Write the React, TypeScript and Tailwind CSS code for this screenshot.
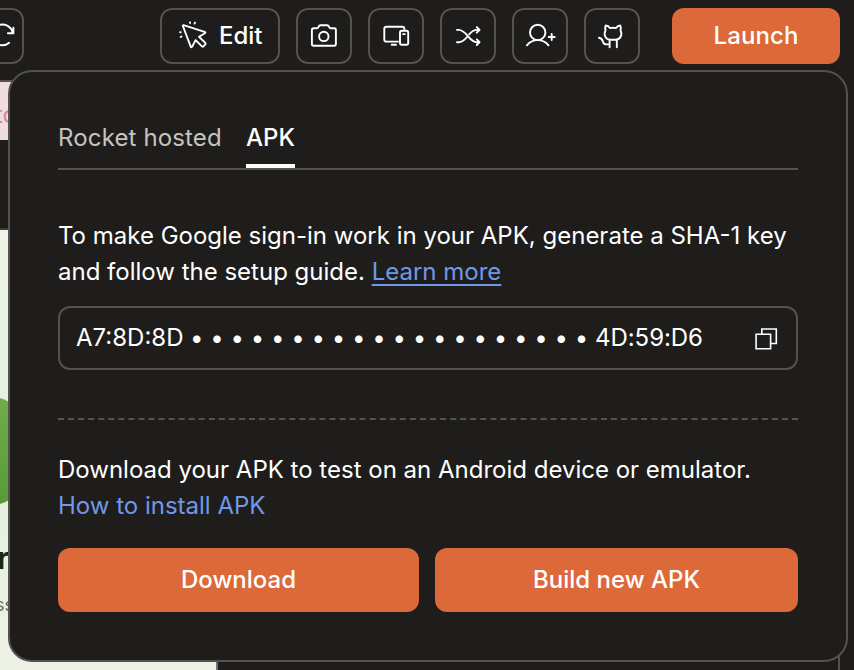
import type { ReactNode } from "react";

const BULLETS = Array.from({ length: 20 });

function ToolButton({ label, children }: { label: string; children: ReactNode }) {
    return (
        <button
            aria-label={label}
            className="flex h-14 w-14 shrink-0 items-center justify-center rounded-xl border-2 border-[#54524d] text-white"
        >
            {children}
        </button>
    );
}

function Icon({ children, className = "" }: { children: ReactNode; className?: string }) {
    return (
        <svg
            width="32"
            height="32"
            viewBox="0 0 32 32"
            fill="none"
            stroke="currentColor"
            strokeWidth="1.9"
            strokeLinecap="round"
            strokeLinejoin="round"
            className={`shrink-0 ${className}`}
        >
            {children}
        </svg>
    );
}

function Toolbar() {
    return (
        <header className="flex h-20 items-start pt-2 text-white">
            <div className="-ml-8 flex">
                <ToolButton label="Reload">
                    <Icon className="translate-x-1.5">
                        <path d="M26.6 12.6A10.4 10.4 0 1 0 23.2 22.800M27.400 7.700v5.500h-5.500" />
                    </Icon>
                </ToolButton>
            </div>

            <div className="ml-[136px] flex gap-4">
                <button className="flex h-14 w-[120px] items-center rounded-xl border-2 border-[#54524d] pl-4 text-2xl font-medium">
                    <Icon>
                        <path d="M5.600 5.200l21 6.600c.9.3 1 .9.3 1.400L21 16.700l6.300 6.200c.5.5.5 1 0 1.500l-1.800 1.900c-.5.500-1 .500-1.500 0l-6.400-6.200-3.400 6.500c-.5.900-1.200.900-1.500 0L4.900 6c-.2-.6.1-1 .7-.8Z" />
                        <path d="M11.900 2.300l.2.700M16.500 3.600l.5-1M2.100 12.200l.6.100M2.700 17l.8-.5" />
                    </Icon>
                    <span className="ml-[9px]">Edit</span>
                </button>
                <ToolButton label="Screenshot">
                    <Icon>
                        <path d="M3.900 10c0-1 .7-1.700 1.700-1.700h3.300c.8 0 1.200-.4 1.500-1.100l.4-.9c.3-.7.8-1 1.500-1h7c.7 0 1.200.3 1.500 1l.4.9c.3.7.7 1.100 1.500 1.100h3.500c1 0 1.700.7 1.700 1.700v14c0 1-.7 1.700-1.700 1.700H5.600c-1 0-1.700-.7-1.700-1.700Z" />
                        <circle cx="15.800" cy="16.400" r="4.700" />
                    </Icon>
                </ToolButton>
                <ToolButton label="Devices">
                    <Icon>
                        <path d="M18 21.600H6.500c-1.300 0-2.200-.9-2.200-2.200V8.900c0-1.300.9-2.200 2.200-2.200h15.700c1.300 0 2.200.9 2.200 2.200M11.700 24.700h4.300" />
                        <rect x="20" y="10.800" width="8.200" height="14" rx="1.800" />
                        <path d="M23 14.100h1.800" />
                    </Icon>
                </ToolButton>
                <ToolButton label="Shuffle">
                    <Icon>
                        <path d="M5 9.900h1.500c8.500 0 10.200 12.300 18.500 12.300h2.300M5 22.200h1.500c4.200 0 6.700-2.800 9-5.700M17.200 14.300c2.200-2.600 4.200-4.400 7.800-4.400h2.300M24.800 7.100l2.800 2.800-2.800 2.800M24.800 19.400l2.800 2.800-2.800 2.800" />
                    </Icon>
                </ToolButton>
                <ToolButton label="Invite">
                    <Icon>
                        <circle cx="13.700" cy="12.400" r="7.700" />
                        <path d="M2.900 25.300c5.400-6.900 16.200-6.900 21.600 0M27.700 14v6M24.700 17h6" />
                    </Icon>
                </ToolButton>
                <ToolButton label="GitHub">
                    <Icon>
                        <path d="M9.500 10.300c-.5-1.900-.3-3.700.2-4.800 1.700.1 3.200.9 4.200 2.600 1.900-.4 4.300-.4 6.200 0 1-1.700 2.500-2.500 4.200-2.600.5 1.100.7 2.900.2 4.800 1 2 1.100 4.600.1 6.500-1 2-2.700 2.900-5 2.900h-5.200c-2.300 0-4-.9-5-2.900-1-1.900-.9-4.500.1-6.500ZM13.600 19.900v7.400M20.800 19.900v7.400M13.400 24.400h-2.500c-2.300 0-3.400-1-3.800-2.500-.6-2.300-2-3.900-4.200-4.200" />
                    </Icon>
                </ToolButton>
            </div>

            <button className="ml-8 h-14 w-[168px] rounded-xl bg-[#dc693a] text-2xl font-medium tracking-[0.005em]">
                Launch
            </button>
        </header>
    );
}

// App preview, mostly hidden by the launch dialog
function Preview() {
    return (
        <main className="h-[590px] w-[840px] overflow-hidden border-t-2 border-r-2 border-[#54524d]">
            <div className="h-[58px] w-[218px] bg-[#efdce1] pt-[19px] text-2xl leading-7 text-[#d98a98]">
                <span className="-ml-[5px]">to</span>
            </div>
            <div className="h-[90px] w-[218px] border-b-2 border-[#3f3b36]" />
            <div className="h-[440px] w-[218px] border-r-2 border-[#73736e] bg-linear-to-b from-[#edf3e6] via-[#e3f0df] to-[#edf1e4]">
                <div className="h-[167px]" />
                <div className="-ml-[84px] h-[108px] w-[108px] rounded-[32px] bg-linear-to-b from-[#6fad48] to-[#579b37]" />
                <div className="-ml-[3px] pt-[33px] text-[30px] leading-10 font-bold text-[#182914]">r</div>
                <div className="-ml-[5px] pt-[15px] text-lg leading-6 text-[#62705d]">ss</div>
            </div>
        </main>
    );
}

function LaunchDialog() {
    return (
        <section className="absolute top-[70px] left-2 h-[592px] w-[840px] rounded-3xl border-2 border-[#54524d] bg-[#1e1d1b] px-12 pt-12 text-2xl text-white">
            <nav className="flex h-[50px] gap-6 border-b-2 border-[#54524d]">
                <button className="h-12 w-[164px] pb-[13px] text-left tracking-[0.006em] whitespace-nowrap text-[#c5c4c0]">Rocket hosted</button>
                <button className="h-12 border-b-4 border-white pb-[9px] font-medium">APK</button>
            </nav>

            <p className="mt-12 leading-9 whitespace-nowrap">
                To make Google sign-in work in your APK, generate a SHA-1 key
                <br />
                and follow the setup guide.{" "}
                <a className="text-[#7198e8] underline decoration-2 underline-offset-4">Learn more</a>
            </p>

            <div className="mt-4 flex h-16 items-center rounded-xl border-2 border-[#54524d] px-4">
                <span>A7:8D:8D</span>
                <span className="ml-[3px] flex">
                    {BULLETS.map((_, i) => (
                        <span key={i} className="w-[20.26px] text-center">•</span>
                    ))}
                </span>
                <span className="ml-[3.500px] tracking-[-0.002em]">4D:59:D6</span>
                <button aria-label="Copy" className="ml-auto">
                    <svg width="28" height="28" viewBox="0 0 28 28" fill="none" stroke="currentColor" strokeWidth="1.6">
                        <path d="M4.100 10.300h14.500v14.500H4.100ZM9.800 10.300V5h14.500v14.500h-5.700" />
                    </svg>
                </button>
            </div>

            <hr className="mt-12 border-t-2 border-dashed border-[#54524d]" />

            <p className="mt-8 leading-9 whitespace-nowrap">
                Download your APK to test on an Android device or emulator.
                <br />
                <a className="text-[#7198e8]">How to install APK</a>
            </p>

            <div className="mt-6 flex gap-4 font-medium">
                <button className="h-16 w-[361px] rounded-xl bg-[#dc693a]">Download</button>
                <button className="h-16 flex-1 rounded-xl bg-[#dc693a]">Build new APK</button>
            </div>
        </section>
    );
}

export default function App() {
    return (
        <div className="relative h-[670px] w-[854px] overflow-hidden bg-[#1e1d1b] font-[Inter,sans-serif]">
            <Toolbar />
            <Preview />
            <LaunchDialog />
        </div>
    );
}
